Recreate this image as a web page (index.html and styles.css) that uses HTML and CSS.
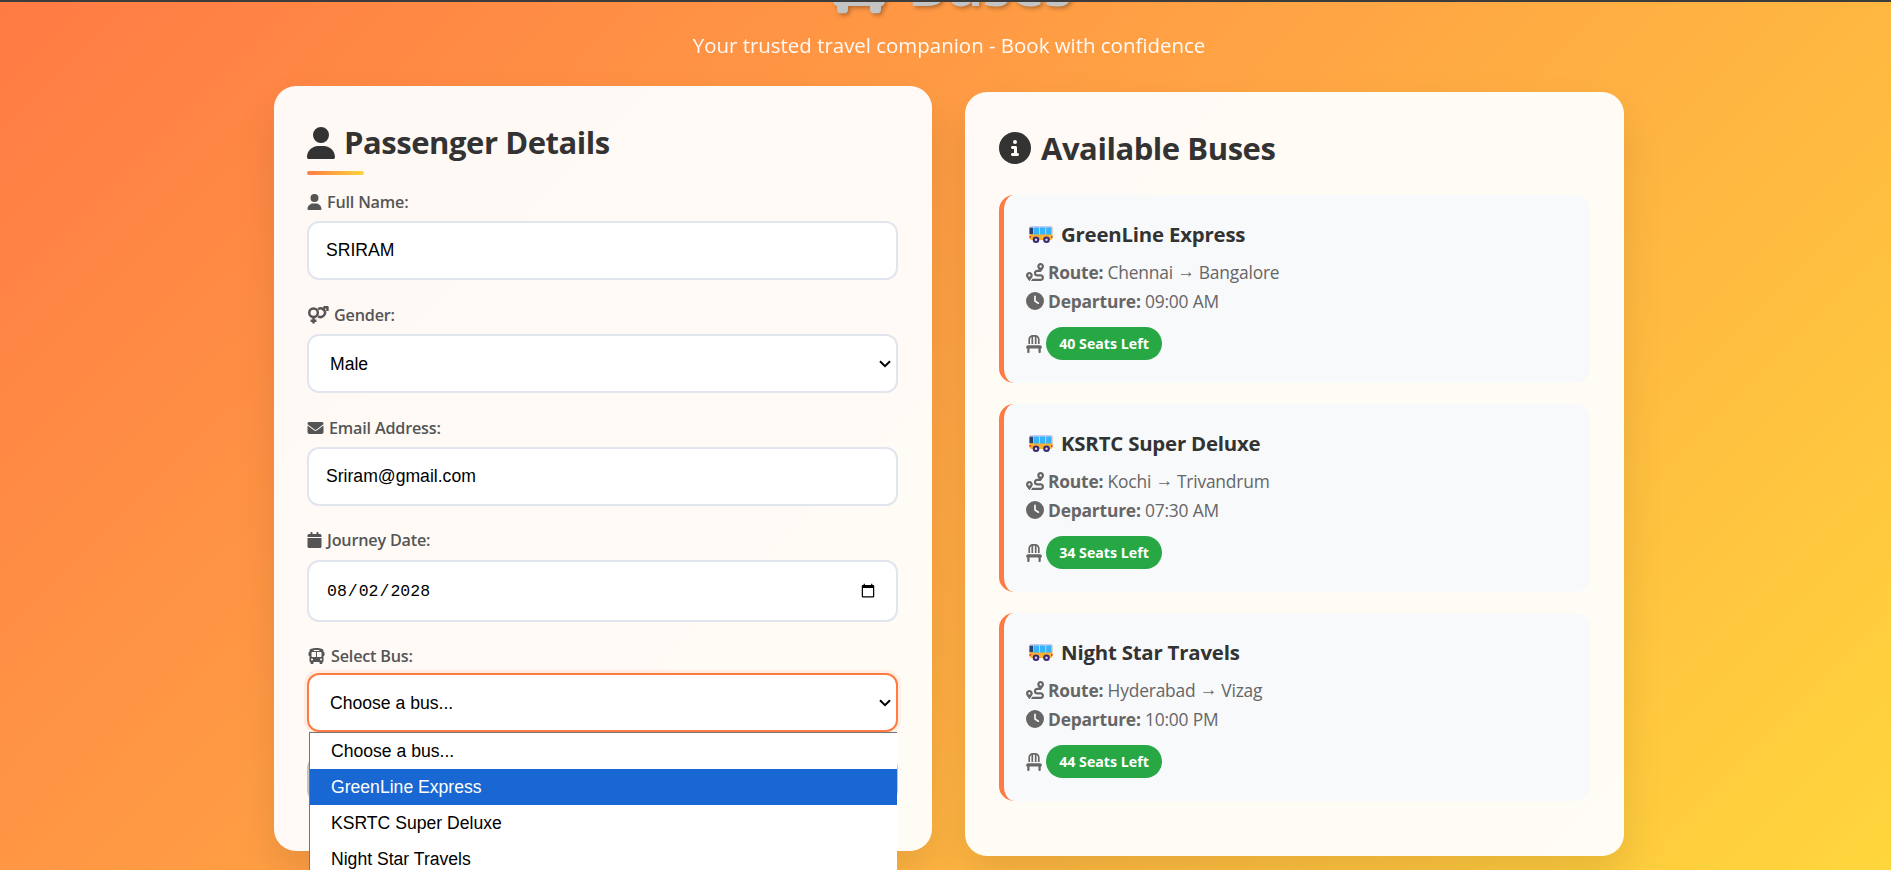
FILE: index.html
```html
<!DOCTYPE html>
<html lang="en">
<head>
<meta charset="utf-8">
<title>Buses</title>
<link rel="stylesheet" href="styles.css">
</head>
<body>
<svg class="defs" aria-hidden="true">
  <symbol id="i-user" viewBox="0 0 448 512"><path d="M224 256A128 128 0 1 0 224 0a128 128 0 1 0 0 256zm-45.7 48C79.8 304 0 383.8 0 482.3C0 498.7 13.3 512 29.7 512H418.3c16.4 0 29.7-13.3 29.7-29.7C448 383.8 368.2 304 269.7 304H178.3z"/></symbol>
  <symbol id="i-info" viewBox="0 0 512 512"><path d="M256 512A256 256 0 1 0 256 0a256 256 0 1 0 0 512zM216 336h24V272H216c-13.3 0-24-10.7-24-24s10.7-24 24-24h48c13.3 0 24 10.7 24 24v88h8c13.3 0 24 10.7 24 24s-10.7 24-24 24H216c-13.3 0-24-10.7-24-24s10.7-24 24-24zm40-208a32 32 0 1 1 0 64 32 32 0 1 1 0-64z"/></symbol>
  <symbol id="i-mail" viewBox="0 0 512 512"><path d="M48 64C21.5 64 0 85.5 0 112c0 15.1 7.1 29.3 19.2 38.4L236.8 313.6c11.4 8.5 27 8.5 38.4 0L492.8 150.4c12.1-9.1 19.2-23.3 19.2-38.4c0-26.5-21.5-48-48-48H48zM0 176V384c0 35.3 28.7 64 64 64H448c35.3 0 64-28.7 64-64V176L294.4 339.2c-22.8 17.1-54 17.1-76.8 0L0 176z"/></symbol>
  <symbol id="i-cal" viewBox="0 0 448 512"><path d="M96 32V64H48C21.5 64 0 85.5 0 112v48H448V112c0-26.5-21.5-48-48-48H352V32c0-17.7-14.3-32-32-32s-32 14.3-32 32V64H160V32c0-17.7-14.3-32-32-32S96 14.3 96 32zM448 192H0V464c0 26.5 21.5 48 48 48H400c26.5 0 48-21.5 48-48V192z"/></symbol>
  <symbol id="i-clock" viewBox="0 0 512 512"><path d="M256 0a256 256 0 1 1 0 512A256 256 0 1 1 256 0zM232 120V256c0 8 4 15.5 10.7 20l96 64c11 7.4 25.9 4.4 33.3-6.7s4.4-25.9-6.7-33.3L280 243.2V120c0-13.3-10.7-24-24-24s-24 10.7-24 24z"/></symbol>
  <symbol id="i-route" viewBox="0 0 512 512"><path d="M416 320h-96c-17.6 0-32-14.4-32-32s14.4-32 32-32h96s96-107 96-160-43-96-96-96-96 43-96 96c0 25.5 22.2 63.4 45.3 96H320c-52.9 0-96 43.1-96 96s43.1 96 96 96h96c17.6 0 32 14.4 32 32s-14.4 32-32 32H185.5c-16 24.8-33.8 47.7-47.3 64H416c52.9 0 96-43.1 96-96s-43.1-96-96-96zm0-256c17.7 0 32 14.3 32 32s-14.3 32-32 32-32-14.3-32-32 14.3-32 32-32zM96 256c-53 0-96 43-96 96s96 160 96 160 96-107 96-160-43-96-96-96zm0 128c-17.7 0-32-14.3-32-32s14.3-32 32-32 32 14.3 32 32-14.3 32-32 32z"/></symbol>
  <symbol id="i-chair" viewBox="0 0 448 512"><path d="M248 48V256h48V58.7c23.9 13.8 40 39.7 40 69.3V256h48V128C384 57.3 326.7 0 256 0H192C121.3 0 64 57.3 64 128V256h48V128c0-29.6 16.1-55.5 40-69.3V256h48V48h48zM48 288c-12.1 0-23.2 6.8-28.6 17.7l-16 32c-5 9.9-4.4 21.7 1.4 31.1S20.9 384 32 384l0 96c0 17.7 14.3 32 32 32s32-14.3 32-32V384H352v96c0 17.7 14.3 32 32 32s32-14.3 32-32V384c11.1 0 21.4-5.7 27.2-15.2s6.4-21.2 1.4-31.1l-16-32C423.2 294.8 412.1 288 400 288H48z"/></symbol>
  <symbol id="i-bus" viewBox="0 0 576 512"><path d="M288 0C422.4 0 512 35.2 512 80V96l0 32c17.7 0 32 14.3 32 32v64c0 17.7-14.3 32-32 32l0 160c0 17.7-14.3 32-32 32v32c0 17.7-14.3 32-32 32H416c-17.7 0-32-14.3-32-32V448H192v32c0 17.7-14.3 32-32 32H128c-17.7 0-32-14.3-32-32l0-32c-17.7 0-32-14.3-32-32l0-160c-17.7 0-32-14.3-32-32V160c0-17.7 14.3-32 32-32h0V96h0V80C64 35.2 153.6 0 288 0zM128 160v96c0 17.7 14.3 32 32 32H272V128H160c-17.7 0-32 14.3-32 32zM304 288H416c17.7 0 32-14.3 32-32V160c0-17.7-14.3-32-32-32H304V288zM144 400a32 32 0 1 0 0-64 32 32 0 1 0 0 64zm288 0a32 32 0 1 0 0-64 32 32 0 1 0 0 64zM384 80c0-8.8-7.2-16-16-16H208c-8.8 0-16 7.2-16 16s7.2 16 16 16H368c8.8 0 16-7.2 16-16z"/></symbol>
  <symbol id="i-gender" viewBox="0 0 640 512"><g fill="none" stroke="currentColor" stroke-width="72"><circle cx="190" cy="190" r="125"/><path d="M190 315V505M105 420H275"/><path d="M325 85a125 125 0 1 1 0 205"/><path d="M440 110L580 -10M480 30H595V140" stroke-linejoin="round"/></g></symbol>
  <symbol id="e-bus" viewBox="0 0 24 18">
    <rect x="0.5" y="0.5" width="23" height="14" rx="2.2" fill="#f9b233"/>
    <path d="M0.5 2.4A1.9 1.9 0 0 1 2.4 0.5H21.6A1.9 1.9 0 0 1 23.5 2.4V8.5H0.5z" fill="#c6cdf3"/>
    <rect x="0.5" y="2.2" width="3.6" height="6.4" fill="#2a3f6e"/>
    <rect x="4.8" y="2" width="5.2" height="7" fill="#35b4fb"/>
    <rect x="11" y="2" width="5.2" height="7" fill="#35b4fb"/>
    <rect x="17.2" y="2" width="5.2" height="7" fill="#35b4fb"/>
    <rect x="0.5" y="10.5" width="1.6" height="2" fill="#e5442f"/>
    <rect x="22" y="10.5" width="1.5" height="2" fill="#e5442f"/>
    <circle cx="7" cy="14.2" r="3.3" fill="#3b2a6e"/><circle cx="7" cy="14.2" r="1.2" fill="#d9d4f0"/>
    <circle cx="17.5" cy="14.2" r="3.3" fill="#3b2a6e"/><circle cx="17.5" cy="14.2" r="1.2" fill="#d9d4f0"/>
  </symbol>
</svg>
<div class="topline"></div>
<div class="page">
  <header class="header">
    <h1 class="brand"><svg class="brand-icon"><use href="#i-bus"/></svg><span>Buses</span></h1>
    <p class="tagline">Your trusted travel companion - Book with confidence</p>
  </header>
  <main class="columns">
    <section class="card card-form">
      <h2 class="card-title underlined"><svg class="title-icon user"><use href="#i-user"/></svg>Passenger Details</h2>
      <form class="form">
        <div class="field">
          <label class="label" for="name"><svg class="label-icon w-user"><use href="#i-user"/></svg>Full Name:</label>
          <input class="control" id="name" type="text" value="SRIRAM">
        </div>
        <div class="field">
          <label class="label" for="gender"><svg class="label-icon w-gender"><use href="#i-gender"/></svg>Gender:</label>
          <select class="control select" id="gender"><option>Male</option><option>Female</option></select>
        </div>
        <div class="field">
          <label class="label" for="email"><svg class="label-icon w-mail"><use href="#i-mail"/></svg>Email Address:</label>
          <input class="control" id="email" type="email" value="Sriram@gmail.com">
        </div>
        <div class="field field-date">
          <label class="label" for="date"><svg class="label-icon w-user"><use href="#i-cal"/></svg>Journey Date:</label>
          <input class="control date" id="date" type="date" value="2028-08-02">
        </div>
        <div class="field field-open">
          <label class="label" for="bus"><svg class="label-icon w-bus"><use href="#i-bus"/></svg>Select Bus:</label>
          <select class="control select focused" id="bus"><option>Choose a bus...</option></select>
          <ul class="dropdown">
            <li class="option">Choose a bus...</li>
            <li class="option active">GreenLine Express</li>
            <li class="option">KSRTC Super Deluxe</li>
            <li class="option">Night Star Travels</li>
          </ul>
        </div>
        <button class="submit" type="button">Book Now</button>
      </form>
    </section>
    <section class="card card-list">
      <h2 class="card-title list-title"><svg class="title-icon info"><use href="#i-info"/></svg>Available Buses</h2>
      <div class="bus-list">
        <article class="bus">
          <h3 class="bus-name"><svg class="emoji"><use href="#e-bus"/></svg>GreenLine Express</h3>
          <p class="bus-line"><svg class="line-icon"><use href="#i-route"/></svg><strong>Route:</strong> Chennai <span class="arrow">→</span> Bangalore</p>
          <p class="bus-line"><svg class="line-icon"><use href="#i-clock"/></svg><strong>Departure:</strong> 09:00 AM</p>
          <p class="bus-seats"><svg class="seat-icon"><use href="#i-chair"/></svg><span class="badge">40 Seats Left</span></p>
        </article>
        <article class="bus">
          <h3 class="bus-name"><svg class="emoji"><use href="#e-bus"/></svg>KSRTC Super Deluxe</h3>
          <p class="bus-line"><svg class="line-icon"><use href="#i-route"/></svg><strong>Route:</strong> Kochi <span class="arrow">→</span> Trivandrum</p>
          <p class="bus-line"><svg class="line-icon"><use href="#i-clock"/></svg><strong>Departure:</strong> 07:30 AM</p>
          <p class="bus-seats"><svg class="seat-icon"><use href="#i-chair"/></svg><span class="badge">34 Seats Left</span></p>
        </article>
        <article class="bus">
          <h3 class="bus-name"><svg class="emoji"><use href="#e-bus"/></svg>Night Star Travels</h3>
          <p class="bus-line"><svg class="line-icon"><use href="#i-route"/></svg><strong>Route:</strong> Hyderabad <span class="arrow">→</span> Vizag</p>
          <p class="bus-line"><svg class="line-icon"><use href="#i-clock"/></svg><strong>Departure:</strong> 10:00 PM</p>
          <p class="bus-seats"><svg class="seat-icon"><use href="#i-chair"/></svg><span class="badge">44 Seats Left</span></p>
        </article>
      </div>
    </section>
  </main>
</div>
</body>
</html>
```
FILE: styles.css
```css
* { box-sizing: border-box; }
html, body { margin: 0; height: 870px; overflow: hidden; }
body {
  background: linear-gradient(135deg, #ff7b44 0%, #ffa644 50%, #ffd63c 100%);
  font-family: "Open Sans", "Noto Sans", sans-serif;
  color: #333;
}
.defs { display: none; }
.topline { position: absolute; top: 0; left: 0; right: 0; height: 2px; background: #3c3c3c; z-index: 5; }
.page { width: 1350px; margin-left: 274px; }

.header { height: 86px; text-align: center; color: #fff; }
.brand {
  display: flex; justify-content: center; align-items: flex-end; gap: 15px;
  height: 14px; margin: 0; overflow: visible;
  font-size: 58px; line-height: 1; font-weight: 700; color: #c4c4c4;
  text-shadow: 2px 2px 4px rgba(0,0,0,.3);
}
.brand span { margin-bottom: 30px; letter-spacing: -1px; line-height: 0; height: 0; }
.brand-icon { width: 66px; height: 60px; flex: none; fill: #c4c4c4; filter: drop-shadow(2px 2px 2px rgba(0,0,0,.3)); }
.tagline { margin: 17px 0 0; font-size: 20.45px; line-height: 28px; color: #fff; opacity: .95; }

.columns { display: grid; grid-template-columns: 658px 659px; column-gap: 33px; align-items: start; }
.card {
  background: rgba(255,255,255,.95);
  border-radius: 22px;
  padding: 33px;
  box-shadow: 0 20px 40px rgba(0,0,0,.1);
}
.card-form { height: 765px; padding-right: 34px; position: relative; }
.card-list { height: 764px; margin-top: 6px; padding: 33px 34px; }

.card-title {
  display: flex; align-items: center; margin: 0;
  font-size: 31px; line-height: 46px; font-weight: 700; color: #333; letter-spacing: -.45px;
}
.underlined { display: block; height: 56px; line-height: 46px; position: relative; }
.underlined::after {
  content: ""; position: absolute; left: 0; bottom: 0;
  width: 57px; height: 4px; border-radius: 2px;
  background: linear-gradient(90deg, #ff7b44, #ffd63c);
}
.title-icon { fill: #333; flex: none; margin-right: 9px; }
.title-icon.user { width: 28px; height: 32px; vertical-align: -5px; }
.title-icon.info { width: 32px; height: 32px; margin-right: 10px; }
.list-title { height: 46px; margin-bottom: 24px; }

.form { display: block; padding-top: 16px; }
.field { margin-bottom: 24px; position: relative; }
.field-date { margin-top: -1px; margin-bottom: 23px; }
.field-date .label { margin-bottom: 9px; }
.field-open .label { margin-bottom: 6px; }
.label { display: flex; align-items: center; height: 22px; margin-bottom: 8px; font-size: 16.2px; font-weight: 600; color: #555; letter-spacing: -.2px; }
.label-icon { height: 16px; fill: #555; margin-right: 5px; flex: none; color: #555; }
.w-user { width: 15px; }
.w-gender { width: 22px; height: 18px; }
.w-mail { width: 17px; }
.w-bus { width: 19px; }

.control {
  display: block; width: 100%; height: 59px;
  padding: 0 17px;
  background: #fff; border: 2.5px solid #e1e5ee; border-radius: 12px;
  font-family: "Liberation Sans", Arial, sans-serif; font-size: 17.6px; color: #000;
  outline: none;
}
.select {
  appearance: none;
  padding-left: 21px;
  background-image: url("data:image/svg+xml,%3Csvg xmlns='http://www.w3.org/2000/svg' width='12' height='8' viewBox='0 0 12 8'%3E%3Cpath d='M1 1.2L6 6.2L11 1.2' fill='none' stroke='%23000' stroke-width='2'/%3E%3C/svg%3E");
  background-repeat: no-repeat;
  background-position: right 5px center;
}
.date { height: 62px; padding-right: 18px; font-family: "Liberation Mono", monospace; font-size: 16.5px; }
.focused { border-color: #ff7b44; box-shadow: 0 0 0 3px rgba(255,123,68,.1); }

.dropdown {
  position: absolute; left: 2px; right: 1px; top: 87px; z-index: 3;
  margin: 0; padding: 0; list-style: none;
  background: #fff; border: 1px solid #767676; border-width: 1px 0 0 1px;
  font-family: "Liberation Sans", Arial, sans-serif; font-size: 17.6px; color: #000;
}
.option { height: 36px; line-height: 36px; padding-left: 21px; }
.option.active { background: #1967d2; color: #fff; }
.submit { display: block; width: 100%; height: 46px; border: 0; border-radius: 12px; background: #c9c3be; color: #c9c3be; font-size: 16px; }

.bus-list { display: flex; flex-direction: column; gap: 21px; }
.bus {
  height: 188px; padding: 20px 22px;
  background: #f8f9fb; border-left: 5px solid #ff7b44; border-radius: 15px;
}
.bus-name { display: flex; align-items: center; height: 30px; margin: 4px 0 8px; font-size: 20.4px; font-weight: 700; color: #333; letter-spacing: -.2px; }
.emoji { width: 24px; height: 19px; margin: 0 8px 0 3px; flex: none; }
.bus-line { display: flex; align-items: center; height: 29px; margin: 0; font-size: 17.4px; color: #666; white-space: pre; letter-spacing: -.2px; }
.bus-line strong { font-weight: 700; }
.arrow { font-family: "Liberation Sans", sans-serif; }
.line-icon { width: 18px; height: 18px; fill: #666; flex: none; margin-right: 4px; }
.bus-seats { display: flex; align-items: center; margin: 12px 0 0; }
.seat-icon { width: 16px; height: 18px; fill: #666; flex: none; margin-right: 4px; }
.badge { display: flex; align-items: center; justify-content: center; width: 116px; height: 33px; border-radius: 17px; background: #28a745; color: #fff; font-size: 14.2px; font-weight: 700; }
```
